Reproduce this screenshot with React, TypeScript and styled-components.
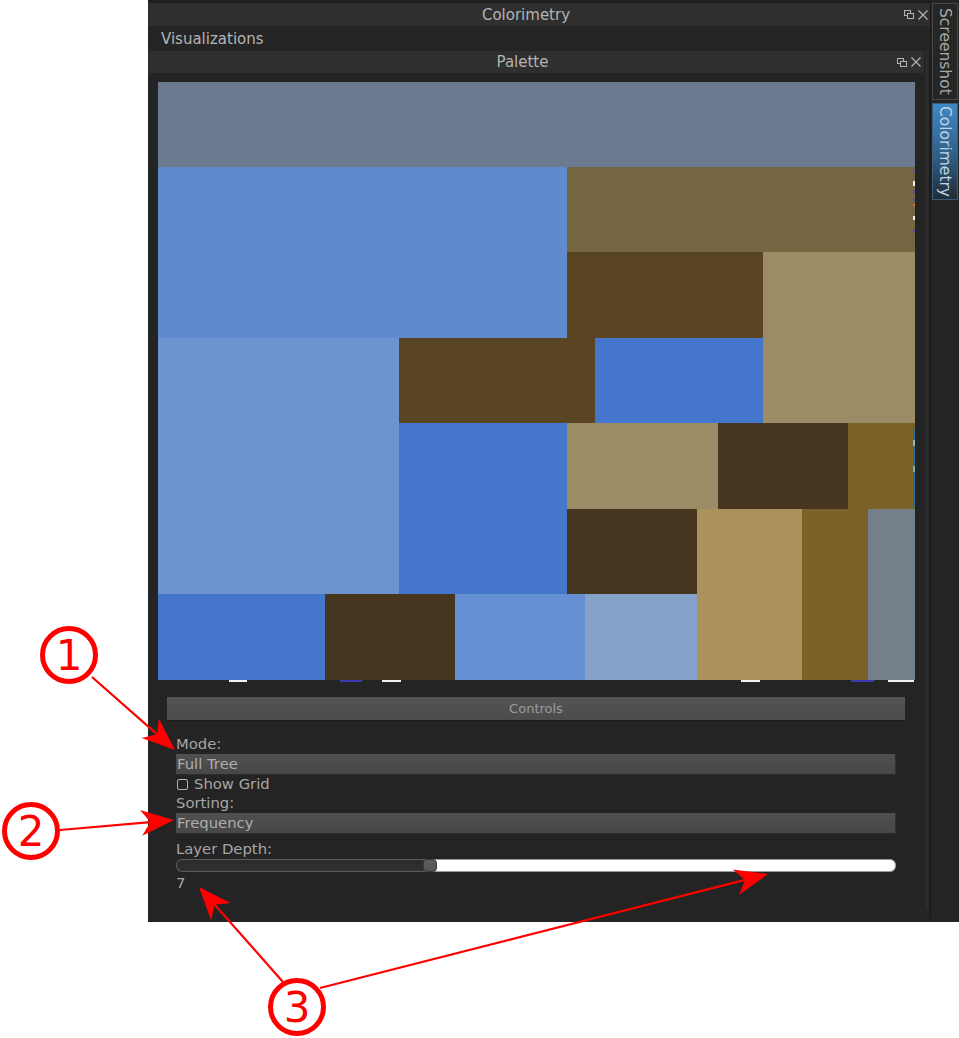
import styled, { createGlobalStyle } from "styled-components";

const GlobalStyle = createGlobalStyle`
  *{box-sizing:border-box}
  html,body{margin:0;background:#fff;font-family:"DejaVu Sans","Liberation Sans",sans-serif;}
`;

const Page = styled.div`position:relative;width:959px;height:1038px;background:#fff;overflow:hidden;`;
const Window = styled.div`margin-left:148px;width:811px;height:922px;background:#242424;display:flex;`;
const Dock = styled.div`width:782px;display:flex;flex-direction:column;border-top:3px solid #1f1f1f;`;

interface BarProps { $h: number; $pr: number; }
const TitleBar = styled.div<BarProps>`
  height:${p => p.$h}px; flex:none; background:#2f2f2f; display:flex; align-items:center;
  padding-right:${p => p.$pr}px; color:#b3b3b3; font-size:15px;
`;
const TitleText = styled.div`flex:1;text-align:center;`;
const TitleButtons = styled.div`display:flex;gap:4px;align-items:center;`;
const MenuBar = styled.div`height:25px;flex:none;padding:1px 0 0 13px;line-height:24px;font-size:15px;color:#b4b4b4;`;

const DockBody = styled.div`flex:1;display:flex;`;
const Panel = styled.div`width:776px;display:flex;flex-direction:column;`;
const Strip = styled.div`width:6px;margin-bottom:12px;background:#2b2b2b;border-left:1px solid #222;border-right:1px solid #1b1b1b;`;
const PanelContent = styled.div`padding:9px 9px 0 10px;`;

const Controls = styled.section`margin-top:15px;`;
const ControlsHeader = styled.div`
  margin:0 10px 0 9px; height:24px; line-height:23px; text-align:center; font-size:13px; color:#9c9c9c;
  background:linear-gradient(#545454,#4c4c4c); border-bottom:1px solid #1c1c1c;
`;
const Form = styled.div`padding:13px 19px 0 18px;display:flex;flex-direction:column;font-size:14.8px;color:#a6a6a6;`;
const Label = styled.div<{ $mt?: number }>`height:19px;padding-top:1px;line-height:18px;margin-top:${p => p.$mt ?? 0}px;`;
const Combo = styled.div`
  height:21px; margin-top:1px; padding-left:1px; line-height:19px; color:#adadad;
  background:linear-gradient(#505050,#474747); border-bottom:1px solid #2c2c2c; border-right:1px solid #303030;
`;
const CheckRow = styled.div`height:18px;display:flex;align-items:center;gap:6px;padding-left:1px;line-height:18px;`;
const CheckBox = styled.span`width:11px;height:11px;border:1px solid #b4b4b4;border-radius:2px;margin-top:1px;`;
const Slider = styled.div`height:13px;margin-top:1px;display:flex;`;
const SliderFill = styled.div`height:100%;background:linear-gradient(#2a2a2a,#323232);border:1px solid #5c5c5c;border-right:0;border-radius:6px 0 0 6px;`;
const SliderHandle = styled.div`
  position:relative; z-index:1; flex:none; width:14px; height:13px; margin:0 -7px;
  background:linear-gradient(#5e5e5e,#545454); border:1px solid #3c3c3c; border-radius:4px;
`;
const SliderRest = styled.div`flex:1;height:100%;background:#fff;border:1px solid #9a9a9a;border-left:0;border-radius:0 6px 6px 0;`;
const Value = styled.div`height:19px;padding-top:2px;line-height:18px;`;

const TabColumn = styled.div`width:29px;display:flex;flex-direction:column;gap:3px;padding:3px 1px 0 1px;border-left:1px solid #1b1b1b;`;
const Tab = styled.div<{ $active?: boolean }>`
  height:97px; display:flex; align-items:center; justify-content:center; font-size:15.5px;
  color:${p => p.$active ? "#c3d3e2" : "#a6a6a6"};
  background:${p => p.$active ? "linear-gradient(#3f88c4,#2f5f88 55%,#222c35)" : "#262626"};
  border:1px solid ${p => p.$active ? "#3c5d78" : "#474747"};
`;
const TabText = styled.span`writing-mode:vertical-rl;`;

const Overlay = styled.svg`position:absolute;left:0;top:0;pointer-events:none;`;

function FloatIcon() {
  return (
    <svg width="10" height="9" viewBox="0 0 10 9">
      <rect x="0.5" y="0.5" width="6" height="5" fill="#2f2f2f" stroke="#b4b4b4" />
      <rect x="3.5" y="3.5" width="6" height="5" fill="#2f2f2f" stroke="#b4b4b4" />
    </svg>
  );
}
function CloseIcon() {
  return (
    <svg width="10" height="10" viewBox="0 0 10 10">
      <path d="M0.5 0.5 L9.5 9.5 M9.5 0.5 L0.5 9.5" stroke="#b4b4b4" strokeWidth="1.2" />
    </svg>
  );
}

const OFF_X = 158, OFF_Y = 82;
const cells: [number, number, number, number, string][] = [
  [158, 82, 915, 167, "#6b7a8f"],
  [158, 167, 567, 338, "#5f8acd"],
  [567, 167, 915, 252, "#756540"],
  [567, 252, 763, 338, "#5a4522"],
  [763, 252, 915, 423, "#9c8c66"],
  [158, 338, 399, 594, "#6d94ce"],
  [399, 338, 595, 423, "#5a4522"],
  [595, 338, 763, 423, "#4477cc"],
  [399, 423, 567, 594, "#4477cc"],
  [567, 423, 718, 509, "#9c8c66"],
  [718, 423, 848, 509, "#47361f"],
  [848, 423, 915, 509, "#7a6128"],
  [567, 509, 697, 594, "#47361f"],
  [697, 509, 802, 680, "#ab915c"],
  [802, 509, 868, 680, "#7a6128"],
  [868, 509, 915, 680, "#73808a"],
  [158, 594, 325, 680, "#4477cc"],
  [325, 594, 455, 680, "#47361f"],
  [455, 594, 585, 680, "#6590d4"],
  [585, 594, 697, 680, "#87a2c9"],
];
// tiny leaf nodes squeezed along the edges
const specks: [number, number, number, number, string][] = [
  [229, 680, 247, 682, "#f2f2f2"], [340, 680, 362, 682, "#3b3bb0"], [382, 680, 401, 682, "#f2f2f2"],
  [741, 680, 760, 682, "#f2f2f2"], [851, 680, 874, 682, "#3b3bb0"], [888, 680, 914, 682, "#f2f2f2"],
  [913, 170, 915, 172, "#4a4ad0"], [913, 181, 915, 186, "#f0f0f0"], [913, 190, 915, 193, "#4a4ad0"],
  [913, 199, 915, 201, "#4a4ad0"], [913, 204, 915, 206, "#e07030"], [913, 216, 915, 220, "#f0f0f0"],
  [913, 229, 915, 232, "#4a4ad0"], [913, 428, 915, 508, "#2a6f92"], [913, 440, 915, 446, "#8ab8c8"],
  [913, 466, 915, 472, "#7fb0c2"],
];

function Treemap() {
  return (
    <svg width="757" height="600" viewBox="0 0 757 600" style={{ display: "block" }}>
      {[...cells, ...specks].map(([x1, y1, x2, y2, c], i) => (
        <rect key={i} x={x1 - OFF_X} y={y1 - OFF_Y} width={x2 - x1} height={y2 - y1} fill={c} />
      ))}
    </svg>
  );
}

function Arrow({ from, to }: { from: [number, number]; to: [number, number] }) {
  const [x0, y0] = from, [x1, y1] = to;
  const len = Math.hypot(x1 - x0, y1 - y0);
  const dx = (x1 - x0) / len, dy = (y1 - y0) / len;
  const px = -dy, py = dx;
  const L = 33, W = 13;
  const bx = x1 - dx * L, by = y1 - dy * L;
  const nx = x1 - dx * L * 0.72, ny = y1 - dy * L * 0.72;
  const pts = [
    [x1, y1], [bx + px * W, by + py * W], [nx, ny], [bx - px * W, by - py * W],
  ].map(p => p.join(",")).join(" ");
  return (
    <g>
      <line x1={x0} y1={y0} x2={nx} y2={ny} stroke="#ff0000" strokeWidth="2.2" />
      <polygon points={pts} fill="#ff0000" />
    </g>
  );
}

function Badge({ cx, cy, n }: { cx: number; cy: number; n: string }) {
  return (
    <g>
      <circle cx={cx} cy={cy} r="26.5" fill="#fff" stroke="#ff0000" strokeWidth="5" />
      <text x={cx} y={cy + 15} textAnchor="middle" fontSize="42" fill="#ff0000" fontFamily="DejaVu Sans, sans-serif">{n}</text>
    </g>
  );
}

export default function App() {
  const min = 1, max = 18, depth = 7;
  const pct = ((depth - min) / (max - min)) * 100;

  return (
    <>
      <GlobalStyle />
      <Page>
        <Window>
          <Dock>
            <TitleBar $h={23} $pr={2}>
              <TitleText>Colorimetry</TitleText>
              <TitleButtons><FloatIcon /><CloseIcon /></TitleButtons>
            </TitleBar>
            <MenuBar>Visualizations</MenuBar>
            <DockBody>
              <Panel>
                <TitleBar $h={22} $pr={3}>
                  <TitleText>Palette</TitleText>
                  <TitleButtons><FloatIcon /><CloseIcon /></TitleButtons>
                </TitleBar>
                <PanelContent>
                  <Treemap />
                  <Controls>
                    <ControlsHeader>Controls</ControlsHeader>
                    <Form>
                      <Label>Mode:</Label>
                      <Combo>Full Tree</Combo>
                      <CheckRow><CheckBox />Show Grid</CheckRow>
                      <Label>Sorting:</Label>
                      <Combo>Frequency</Combo>
                      <Label $mt={5}>Layer Depth:</Label>
                      <Slider>
                        <SliderFill style={{ width: `${pct}%` }} />
                        <SliderHandle />
                        <SliderRest />
                      </Slider>
                      <Value>{depth}</Value>
                    </Form>
                  </Controls>
                </PanelContent>
              </Panel>
              <Strip />
            </DockBody>
          </Dock>
          <TabColumn>
            <Tab><TabText>Screenshot</TabText></Tab>
            <Tab $active><TabText>Colorimetry</TabText></Tab>
          </TabColumn>
        </Window>
        <Overlay width="959" height="1038" viewBox="0 0 959 1038">
          <Arrow from={[92, 677]} to={[175, 750]} />
          <Arrow from={[60, 830]} to={[174, 820]} />
          <Arrow from={[283, 982]} to={[199, 887]} />
          <Arrow from={[320, 988]} to={[768, 874]} />
          <Badge cx={69} cy={655} n="1" />
          <Badge cx={31} cy={831} n="2" />
          <Badge cx={297} cy={1007} n="3" />
        </Overlay>
      </Page>
    </>
  );
}
